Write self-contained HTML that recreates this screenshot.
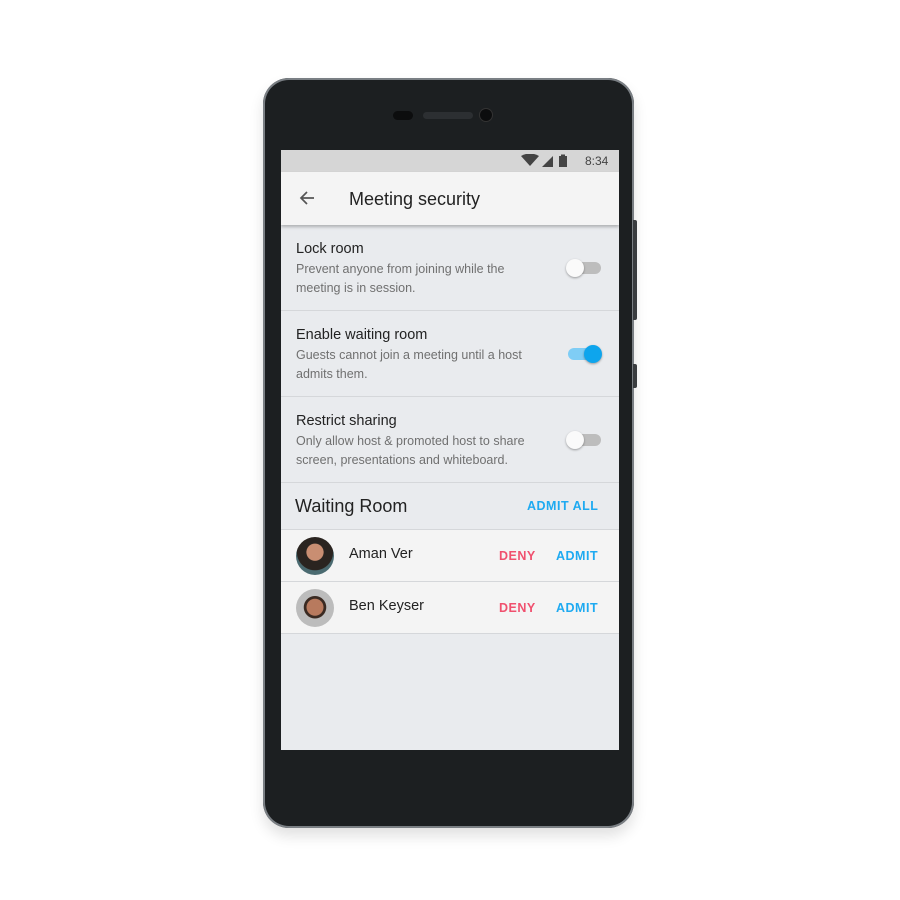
<!DOCTYPE html>
<html><head><style>
*{margin:0;padding:0;box-sizing:border-box}
body{width:900px;height:900px;background:#fff;position:relative;font-family:"Liberation Sans",sans-serif;overflow:hidden}
.phone{position:absolute;left:263px;top:78px;width:371px;height:750px;border-radius:26px;background:#1c1f21;box-shadow:0 0 0 2px #7a7f84 inset,0 8px 14px rgba(0,0,0,.12)}
.btn{position:absolute;left:633px;width:4px;background:#3a3d40;border-radius:0 2px 2px 0}
.screen{position:absolute;left:281px;top:150px;width:338px;height:600px;background:#e9ebee;overflow:hidden}
.sb{height:22px;background:#d6d6d6;position:relative;font-size:12px;color:#444}
.ab{height:53px;background:#f4f4f4;position:relative;box-shadow:0 2px 3px rgba(0,0,0,.25);z-index:2}
.row{position:absolute;left:0;width:338px;height:86px;border-bottom:1px solid #d5d7da}
.t{position:absolute;left:15px;font-size:14.5px;color:#222}
.d{position:absolute;left:15px;font-size:12.5px;color:#707070;line-height:19px;width:250px;height:36px;overflow:hidden}
.tg{position:absolute;left:287px;width:33px;height:12px;border-radius:6px;background:#bdbdbd}
.tg i{position:absolute;top:-3px;width:18px;height:18px;border-radius:50%;background:#fafafa;box-shadow:0 1px 2px rgba(0,0,0,.35)}
.p{position:absolute;left:0;width:338px;height:52px;background:#f4f4f4;border-bottom:1px solid #d5d7da}
.av{position:absolute;left:15px;top:7px;width:38px;height:38px;border-radius:50%}
.nm{position:absolute;left:68px;top:16px;font-size:14.5px;color:#222}
.dn{position:absolute;left:218px;top:19px;font-size:12.5px;font-weight:bold;color:#f0506e;letter-spacing:.5px}
.ad{position:absolute;left:275px;top:19px;font-size:12.5px;font-weight:bold;color:#1eaaf1;letter-spacing:.5px}
</style></head><body>
<div class="phone"></div>
<div class="btn" style="top:220px;height:100px"></div>
<div class="btn" style="top:364px;height:24px"></div>
<div style="position:absolute;left:393px;top:111px;width:20px;height:9px;border-radius:5px;background:#0c0d0e"></div>
<div style="position:absolute;left:423px;top:112px;width:50px;height:7px;border-radius:4px;background:#2c2f32"></div>
<div style="position:absolute;left:480px;top:109px;width:12px;height:12px;border-radius:50%;background:#0c0d0e;box-shadow:0 0 0 1px #333"></div>
<div class="screen">
 <div class="sb">
  <svg style="position:absolute;left:240px;top:4px" width="58" height="14"><path d="M0 2 Q9 -3 18 2 L9 12Z" fill="#444"/><path d="M21 13 L32 2 L32 13Z" fill="#444"/><rect x="38" y="2" width="8" height="11" fill="#444"/><rect x="40" y="0.5" width="4" height="2" fill="#444"/></svg>
  <span style="position:absolute;left:304px;top:4px">8:34</span>
 </div>
 <div class="ab">
  <svg style="position:absolute;left:18px;top:19px" width="16" height="14"><path d="M15 7H2M8 1L2 7l6 6" stroke="#555" stroke-width="1.7" fill="none"/></svg>
  <span style="position:absolute;left:68px;top:17px;font-size:18px;color:#222">Meeting security</span>
 </div>
 <div class="row" style="top:75px"><span class="t" style="top:16px">Lock room</span><div class="d" style="top:35px">Prevent anyone from joining while the meeting is in session.</div><div class="tg" style="top:37px"><i style="left:-2px"></i></div></div>
 <div class="row" style="top:161px"><span class="t" style="top:16px">Enable waiting room</span><div class="d" style="top:35px">Guests cannot join a meeting until a host admits them.</div><div class="tg" style="top:37px;background:#7fcdf5"><i style="left:16px;background:#0ea5ed"></i></div></div>
 <div class="row" style="top:247px"><span class="t" style="top:16px">Restrict sharing</span><div class="d" style="top:35px">Only allow host &amp; promoted host to share screen, presentations and whiteboard.</div><div class="tg" style="top:37px"><i style="left:-2px"></i></div></div>
 <span style="position:absolute;left:14px;top:346px;font-size:18px;color:#222">Waiting Room</span>
 <span style="position:absolute;left:246px;top:349px;font-size:12.5px;font-weight:bold;color:#1eaaf1;letter-spacing:.5px">ADMIT ALL</span>
 <div style="position:absolute;top:379px;left:0;width:338px;height:1px;background:#d5d7da"></div>
 <div class="p" style="top:380px"><div class="av" style="background:radial-gradient(circle at 50% 40%,#c98e72 0 28%,#2a2420 30% 60%,#4a6a70 62%)"></div><span class="nm">Aman Ver</span><span class="dn">DENY</span><span class="ad">ADMIT</span></div>
 <div class="p" style="top:432px"><div class="av" style="background:radial-gradient(circle at 50% 48%,#b87a5e 0 30%,#3a2a22 32% 40%,#bcbcbc 42%)"></div><span class="nm">Ben Keyser</span><span class="dn">DENY</span><span class="ad">ADMIT</span></div>
</div>
</body></html>
